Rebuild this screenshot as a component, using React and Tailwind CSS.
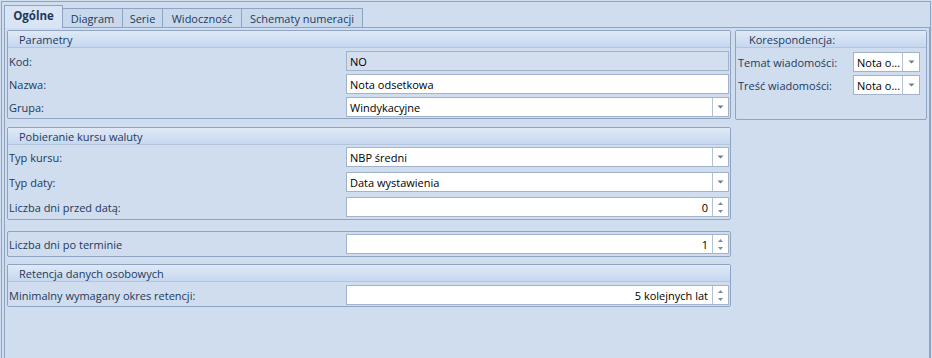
import React from "react";

const LBL = "text-[#1e395b]";

function Arrow() {
  return (
    <svg width="7" height="4" viewBox="0 0 7 4" className="block">
      <path d="M0.5 0.5h6L3.5 3.5z" fill="#6b7a90" />
    </svg>
  );
}

function SpinArrows() {
  return (
    <div className="flex flex-col items-center gap-[5px]">
      <svg width="5" height="3" viewBox="0 0 5 3" className="block">
        <path d="M0 3h5L2.5 0z" fill="#7d8ba0" />
      </svg>
      <svg width="5" height="3" viewBox="0 0 5 3" className="block">
        <path d="M0 0h5L2.5 3z" fill="#7d8ba0" />
      </svg>
    </div>
  );
}

function TextBox({ value, disabled }) {
  return (
    <div
      className={`h-[20px] w-[383px] border border-[#a3b3ca] flex items-center px-[3px] text-black ${
        disabled ? "bg-[#d3dfee]" : "bg-white"
      }`}
    >
      {value}
    </div>
  );
}

function Combo({ value, w = "w-[383px]", btn = "w-[16px]" }) {
  return (
    <div className={`h-[20px] ${w} border border-[#a3b3ca] bg-white flex`}>
      <div className="flex-1 flex items-center px-[3px] text-black overflow-hidden whitespace-nowrap">
        {value}
      </div>
      <div className={`${btn} border-l border-[#b3c1d4] flex items-center justify-center`}>
        <Arrow />
      </div>
    </div>
  );
}

function Spin({ value }) {
  return (
    <div className="h-[20px] w-[383px] border border-[#a3b3ca] bg-white flex">
      <div className="flex-1 flex items-center justify-end pr-[4px] text-black">{value}</div>
      <div className="w-[16px] border-l border-[#b3c1d4] flex items-center justify-center">
        <SpinArrows />
      </div>
    </div>
  );
}

function Row({ label, children }) {
  return (
    <div className="flex items-center h-[20px] pr-[1px]">
      <div className={`flex-1 pl-[1px] ${LBL} whitespace-nowrap`}>{label}</div>
      {children}
    </div>
  );
}

function Header({ title, pl = "pl-[11px]" }) {
  return (
    <div
      className={`h-[17px] bg-linear-to-b from-[#dfe9f7] to-[#c6d8ef] border-b border-[#b3c5dd] ${pl} flex items-center ${LBL}`}
    >
      {title}
    </div>
  );
}

function Group({ title, children, className = "" }) {
  return (
    <div className={`border border-[#8fa3c2] rounded-[2px] ${className}`}>
      {title && <Header title={title} />}
      {children}
    </div>
  );
}

export default function App() {
  const tabs = [
    ["Diagram", "w-[60px]"],
    ["Serie", "w-[40px]"],
    ["Widoczność", "w-[79px]"],
    ["Schematy numeracji", "w-[121px]"],
  ];
  return (
    <div className="w-[932px] h-[358px] bg-[#cfddee] overflow-hidden font-['Open_Sans',sans-serif] text-[11px] leading-none pt-[1px] pl-[1px]">
      <div className="w-[930px] h-[357px] border-l border-t border-r border-[#8fa3c2] pl-[1px] flex flex-col">
        {/* tabs */}
        <div className="flex items-end h-[25px] pt-[3px] pl-[1px] relative z-10">
          <div className="w-[59px] h-[23px] mb-[-1px] bg-[#d9e5f4] border-l border-t border-r border-[#8fa3c2] flex items-center justify-center font-bold text-[#1e395b] text-[11.5px] pb-[2px]">
            Ogólne
          </div>
          {tabs.map(([t, w]) => (
            <div
              key={t}
              className={`${w} h-[19px] bg-[#c9d9ed] border-t border-r border-[#8fa3c2] flex items-center justify-center text-[#1e395b] text-[11px]`}
            >
              {t}
            </div>
          ))}
        </div>
        {/* page */}
        <div className="ml-[1px] w-[926px] flex-1 border-l border-t border-r border-[#8fa3c2] bg-[#cfddee] pl-[2px] pt-[2px] flex">
          <div className="w-[724px] flex flex-col">
            <Group title="Parametry">
              <div className="flex flex-col gap-[3px] pt-[3px] pb-[1px]">
                <Row label="Kod:">
                  <TextBox value="NO" disabled />
                </Row>
                <Row label="Nazwa:">
                  <TextBox value="Nota odsetkowa" />
                </Row>
                <Row label="Grupa:">
                  <Combo value="Windykacyjne" />
                </Row>
              </div>
            </Group>
            <Group title="Pobieranie kursu waluty" className="mt-[8px]">
              <div className="flex flex-col gap-[5px] pt-[2px] pb-[2px]">
                <Row label="Typ kursu:">
                  <Combo value="NBP średni" />
                </Row>
                <Row label="Typ daty:">
                  <Combo value="Data wystawienia" />
                </Row>
                <Row label="Liczba dni przed datą:">
                  <Spin value="0" />
                </Row>
              </div>
            </Group>
            <Group className="mt-[11px]">
              <div className="pt-[2px] pb-[2px]">
                <Row label="Liczba dni po terminie">
                  <Spin value="1" />
                </Row>
              </div>
            </Group>
            <Group title="Retencja danych osobowych" className="mt-[7px]">
              <div className="pt-[3px] pb-[1px]">
                <Row label="Minimalny wymagany okres retencji:">
                  <Spin value="5 kolejnych lat" />
                </Row>
              </div>
            </Group>
          </div>
          <div className="ml-[4px] w-[192px]">
            <div className="border border-[#8fa3c2] rounded-[2px] h-[90px]">
              <Header title="Korespondencja:" pl="pl-[13px]" />
              <div className="flex flex-col gap-[3px] pt-[4px] pl-[2px] pr-[6px]">
                <div className="flex items-center h-[20px]">
                  <div className={`flex-1 ${LBL}`}>Temat wiadomości:</div>
                  <Combo value="Nota o..." w="w-[67px]" btn="w-[17px]" />
                </div>
                <div className="flex items-center h-[20px]">
                  <div className={`flex-1 ${LBL}`}>Treść wiadomości:</div>
                  <Combo value="Nota o..." w="w-[67px]" btn="w-[17px]" />
                </div>
              </div>
            </div>
          </div>
        </div>
      </div>
    </div>
  );
}
